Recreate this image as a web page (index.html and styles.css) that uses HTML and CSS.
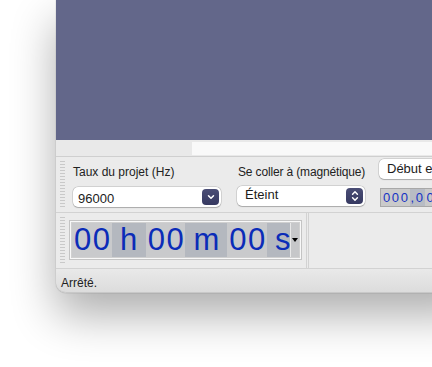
FILE: index.html
```html
<!DOCTYPE html>
<html lang="fr">
<head>
<meta charset="utf-8">
<link rel="stylesheet" href="styles.css">
</head>
<body>
<div class="window">
  <div class="tracks"></div>
  <div class="hscroll"><div class="hscroll-left"></div><div class="hscroll-track"></div></div>
  <div class="toolbar row1">
    <div class="grabber"></div>
    <div class="group rate">
      <div class="label">Taux du projet (Hz)</div>
      <div class="select">
        <span class="select-text">96000</span>
        <span class="select-btn">
          <svg width="10" height="8" viewBox="0 0 10 8"><path d="M2.5 2.8 L5 5.3 L7.5 2.8" fill="none" stroke="#fff" stroke-width="1.5" stroke-linecap="round" stroke-linejoin="round"/></svg>
        </span>
      </div>
    </div>
    <div class="group snap">
      <div class="label">Se coller à (magnétique)</div>
      <div class="select select2">
        <span class="select-text">Éteint</span>
        <span class="select-btn">
          <svg width="10" height="14" viewBox="0 0 10 14"><path d="M2.6 5.2 L5 2.8 L7.4 5.2 M2.6 8.8 L5 11.2 L7.4 8.8" fill="none" stroke="#fff" stroke-width="1.5" stroke-linecap="round" stroke-linejoin="round"/></svg>
        </span>
      </div>
    </div>
    <div class="group sel">
      <div class="btn">Début et fin de la sélection</div>
      <div class="smalltime"><span class="seg">000</span><span class="seg dark">,0</span><span class="seg">00</span></div>
    </div>
  </div>
  <div class="toolbar row2">
    <div class="grabber"></div>
    <div class="timer">
      <span class="d">00</span><span class="u">h</span><span class="d">00</span><span class="u">m</span><span class="d">00</span><span class="u s">s</span><span class="drop"><span class="tri"></span></span>
    </div>
    <div class="sep"></div>
  </div>
  <div class="status">Arrêté.</div>
</div>
</body>
</html>
```
FILE: styles.css
```css
html, body {
  margin: 0;
  padding: 0;
  background: #ffffff;
  width: 432px;
  height: 367px;
  overflow: hidden;
  font-family: "Liberation Sans", Arial, sans-serif;
}
.window {
  margin-left: 56px;
  width: 420px;
  height: 293px;
  display: flex;
  flex-direction: column;
  background: #ececec;
  border-bottom-left-radius: 10px;
  box-shadow: 0 22px 45px rgba(0,0,0,0.32), 0 0 1px rgba(0,0,0,0.5);
  overflow: hidden;
}
.tracks {
  height: 140px;
  background: #63678a;
  flex: none;
}
.hscroll {
  height: 16px;
  display: flex;
  flex: none;
  border-bottom: 1px solid #cfcfcf;
  background: #e9e9e9;
}
.hscroll-left { width: 136px; }
.hscroll-track {
  flex: 1;
  margin-top: 2px;
  height: 13px;
  background: #f9f9f9;
}
.toolbar {
  display: flex;
  flex: none;
  background: #ebebeb;
  border-bottom: 1px solid #d2d2d2;
}
.row1 { height: 55px; }
.row2 { height: 55px; }
.grabber {
  width: 5px;
  margin: 4px 0 4px 4px;
  background: repeating-linear-gradient(to bottom, #c9c9c9 0 1px, transparent 1px 3px);
  flex: none;
}
.group {
  display: flex;
  flex-direction: column;
  flex: none;
}
.rate { margin-left: 8px; width: 148px; }
.snap { margin-left: 16px; width: 128px; }
.sel { margin-left: 14px; }
.label {
  font-size: 12px;
  color: #222;
  margin-top: 8px;
  height: 14px;
  line-height: 14px;
  white-space: nowrap;
}
.rate .label { padding-left: 0; }
.snap .label { padding-left: 1px; letter-spacing: -0.15px; }
.select {
  margin-top: 8px;
  height: 20px;
  box-sizing: border-box;
  background: #fff;
  border-radius: 5px;
  box-shadow: 0 0 0 0.5px rgba(0,0,0,0.18), 0 0.5px 1px rgba(0,0,0,0.2);
  display: flex;
  align-items: center;
  justify-content: space-between;
  padding: 0 2px 0 5px;
}
.select2 { margin-top: 7px; }
.select-text {
  font-size: 13px;
  color: #1c1c1c;
  padding-top: 2px;
}
.select2 .select-text { padding-top: 0; margin-bottom: 4px; padding-left: 3px; }
.select-btn {
  width: 17px;
  height: 16px;
  border-radius: 4px;
  background: linear-gradient(#4a4d75, #363961);
  display: flex;
  align-items: center;
  justify-content: center;
}
.btn {
  margin-top: 2px;
  height: 20px;
  line-height: 19px;
  box-sizing: border-box;
  background: #fff;
  border-radius: 5px;
  box-shadow: 0 0 0 0.5px rgba(0,0,0,0.18), 0 0.5px 1px rgba(0,0,0,0.2);
  padding-left: 8px;
  font-size: 13px;
  color: #1c1c1c;
  white-space: nowrap;
  width: 200px;
}
.smalltime {
  margin-top: 9px;
  margin-left: 1px;
  height: 19px;
  box-sizing: border-box;
  border: 1px solid #a8a8a8;
  background: #cacaca;
  display: flex;
  font-size: 13px;
  line-height: 17px;
  color: #1633c4;
  letter-spacing: 1.6px;
  white-space: nowrap;
  width: 120px;
}
.smalltime .seg { padding-left: 2px; }
.smalltime .dark { background: #b8bcc4; padding-left: 1px; }
.timer {
  margin: 8px 0 0 5px;
  height: 38px;
  width: 231px;
  box-sizing: border-box;
  border: 1px solid #f8f8f8;
  box-shadow: 0 0 0 1px #c4c4c4;
  display: flex;
  padding: 1px;
  background: #d0d0d0;
  flex: none;
}
.timer span {
  font-size: 31px;
  line-height: 34px;
  color: #0b2cb8;
  display: block;
}
.timer .d {
  background: #c9cacc;
  width: 40px;
  letter-spacing: 1.5px;
  padding-left: 2px;
  box-sizing: border-box;
}
.timer .u {
  background: #b4b8bf;
  width: 34px;
  text-align: center;
}
.timer span:nth-child(4) { width: 42px; }
.timer .s { width: 23px; text-align: left; padding-left: 8px; box-sizing: border-box; }
.timer .drop {
  width: 8px;
  background: #c6c7c9;
  position: relative;
  border-left: 1px solid #e8e8e8;
}
.tri {
  position: absolute;
  left: 1px;
  top: 15px;
  width: 0;
  height: 0;
  border-left: 3px solid transparent;
  border-right: 3px solid transparent;
  border-top: 4px solid #000;
}
.sep {
  margin-left: 5px;
  width: 1px;
  border-left: 1px solid #d2d2d2;
  border-right: 1px solid #d2d2d2;
  flex: none;
}
.status {
  flex: 1;
  background: linear-gradient(#e9e9e9, #dcdcdc);
  font-size: 12px;
  color: #222;
  padding: 7px 0 0 5px;
  border-bottom: 1px solid #c8c8c8;
  border-bottom-left-radius: 10px;
}
```
